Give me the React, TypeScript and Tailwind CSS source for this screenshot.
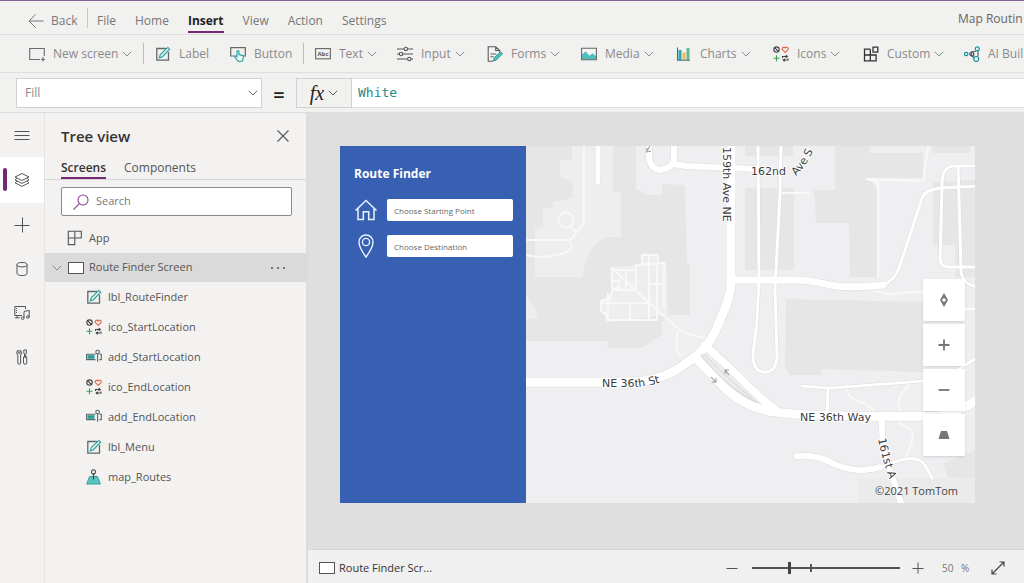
import { useState } from "react";
import type { ReactNode } from "react";

interface IconProps {
  className?: string;
}

interface Tool {
  label: string;
  icon: ReactNode;
  width: string;
  menu?: boolean;
  divider?: boolean;
}

interface Control {
  name: string;
  icon: ReactNode;
}

const Chevron = ({ className = "w-[10px]" }: IconProps) => (
  <svg viewBox="0 0 10 6" className={`shrink-0 ${className}`} fill="none" stroke="currentColor">
    <path d="M0.8 0.8 5 5 9.2 0.8" />
  </svg>
);

const NewScreenIcon = () => (
  <svg viewBox="0 0 16 16" className="w-4 h-4" fill="none" stroke="#6b6b6b" strokeWidth="1.1">
    <path d="M11 13.5H.7v-11h14.6V10" />
    <path d="M14 11v4.500M12 13.500h4" />
  </svg>
);

const LabelIcon = ({ className = "w-4 h-4" }: IconProps) => (
  <svg viewBox="0 0 16 16" className={className} fill="none">
    <path d="M11 2.5H1.8v11.7h11.7V6" stroke="#5f6b6b" strokeWidth="1.3" />
    <path d="m4.3 11.8 1-3.2 7.6-7.2 1.8 1.8-7.3 7.5z" fill="#e4f5f4" stroke="#2a9d9a" strokeWidth="1.1" />
  </svg>
);

const ButtonIcon = () => (
  <svg viewBox="0 0 16 16" className="w-4 h-4" fill="none">
    <path d="M5 10H.7V1.7h14.6V10H13" stroke="#686868" strokeWidth="1.2" />
    <path
      d="M7 10.5V5.6c0-1.4 1.9-1.4 1.9 0v3l3.3.8c1 .3 1.3 1 1.1 2l-.7 3.1c-1.5 1.4-3.9 1.2-5.1 0L4.8 11c0-1.1 1.2-1.4 2.2-.5Z"
      fill="#eefafa"
      stroke="#159b9c"
      strokeWidth="1.1"
    />
  </svg>
);

const TextIcon = () => (
  <svg viewBox="0 0 16 16" className="w-4 h-4" fill="none">
    <rect x=".6" y="2.6" width="14.8" height="10.2" stroke="#666" strokeWidth="1.1" />
    <text x="8" y="10" fontSize="6" fontWeight="700" textAnchor="middle" fill="#555" fontFamily="Open Sans">
      Abc
    </text>
  </svg>
);

const InputIcon = () => (
  <svg viewBox="0 0 16 16" className="w-4 h-4" fill="none" stroke="#555" strokeWidth="1.1">
    <path d="M0 3h7M10.5 3H16M0 8h2.2M5.7 8H16M0 13h10.5M14 13h2" />
    <circle cx="8.8" cy="3" r="1.7" />
    <circle cx="4" cy="8" r="1.7" />
    <circle cx="12.3" cy="13" r="1.7" />
  </svg>
);

const FormsIcon = () => (
  <svg viewBox="0 0 16 16" className="w-4 h-4" fill="none">
    <path d="M6 15.2H1.2V.8h7.5l4 3.7v2M8.7.8v3.7h4M3.5 8h5.8M3.5 10.8h3.2" stroke="#5c5c5c" strokeWidth="1.1" />
    <path d="m6.4 15 1-3.4 6.3-5.8 1.8 1.9-6.1 6.2z" fill="#52c3be" stroke="#249894" />
  </svg>
);

const MediaIcon = () => (
  <svg viewBox="0 0 16 16" className="w-4 h-4">
    <path d="M.6 2.3h14.8v11.4H.6z" fill="#f5f5f5" />
    <path d="M.8 9 4.5 5.3l4 4.5 3-2.5 3.8 3v3.3H.8z" fill="#4fbfbd" />
    <path d="M.6 2.3h14.8v11.4H.6z" fill="none" stroke="#666" strokeWidth="1.1" />
  </svg>
);

const ChartsIcon = () => (
  <svg viewBox="0 0 16 16" className="w-4 h-4">
    <path d="M2.500 4h3v10h-3z" fill="#2ea9ad" />
    <path d="M6.500 6.500h3V14h-3z" fill="#f0b95a" />
    <path d="M10.500 2h3v12h-3z" fill="#65b98c" />
    <path d="M1.5 1.5v12.8h12.500" fill="none" stroke="#34757a" strokeWidth="1.1" />
  </svg>
);

const IconsIcon = () => (
  <svg viewBox="0 0 16 16" className="w-4 h-4" fill="none" strokeWidth="1.1">
    <circle cx="3.5" cy="3.6" r="2.7" stroke="#444" />
    <path d="m1.6 1.7 3.8 3.8" stroke="#444" />
    <path d="M12.2 6.4 9.5 3.7C8.3 1.8 10.8.2 12.2 2c1.4-1.8 3.9-.2 2.7 1.7z" stroke="#df6b4d" />
    <path d="M3.5 9.3v6M.5 12.3h6" stroke="#3e9f56" />
    <path d="M9.500 12v-1.500h4.500M12.700 9.200l1.600 1.300-1.600 1.300M15 12.500V14h-4.500M11.800 12.700 10.200 14l1.600 1.300" stroke="#444" />
  </svg>
);

const CustomIcon = () => (
  <svg viewBox="0 0 16 16" className="w-4 h-4" fill="none" stroke="#333" strokeWidth="1.3">
    <path d="M7.3 3.2H1.5v11.6h11.6V9H1.5M7.3 3.2v11.6M10 1.2h4.8v4.9H10z" />
  </svg>
);

const AiIcon = () => (
  <svg viewBox="0 0 16 16" className="w-4 h-4" fill="none" strokeWidth="1.2">
    <path d="M7.500 10V7.200q0-1.700 1.800-1.700h2.500M14 4.500v5.800M7.500 9.500l2.800 2.500" stroke="#567" />
    <circle cx="2.2" cy="8" r="1.7" stroke="#14999b" />
    <circle cx="7.800" cy="8" r="2" stroke="#456" />
    <circle cx="13.3" cy="2.8" r="2" stroke="#14999b" />
    <circle cx="12.200" cy="13" r="2.500" stroke="#14999b" />
  </svg>
);

const AddressIcon = () => (
  <svg viewBox="0 0 16 16" className="w-4 h-4" fill="none" stroke="#55686a" strokeWidth="1.1">
    <path d="M9.5 5.2H.6v5.4h8.9" />
    <path d="M2 6.7h6v2.5H2z" fill="#2d9d97" stroke="#2d9d97" />
    <circle cx="11.6" cy="3" r="1.8" />
    <path d="M11.6 4.800v8M13.4 5.2h1.9v5.4h-1.9" />
  </svg>
);

const MapIcon = () => (
  <svg viewBox="0 0 16 16" className="w-4 h-4">
    <path d="M3.5 7.500h8l3 7.500H.7z" fill="#59c6bd" stroke="#3b9f98" strokeWidth="1" />
    <circle cx="7.500" cy="2.9" r="2" fill="#f3f2f1" stroke="#555" strokeWidth="1.1" />
    <path d="M7.500 5v5.500" stroke="#444" strokeWidth="1.2" />
  </svg>
);

const AppIcon = () => (
  <svg viewBox="0 0 16 16" className="w-4 h-4" fill="none" stroke="#555" strokeWidth="1.1">
    <path d="M1.3 1.3h6.5v13.3H1.3zM1.3 8h6.5M7.8 1.3h6.5V8H7.8" />
  </svg>
);

const ScreenIcon = () => (
  <span className="block w-4 h-3 shrink-0 border border-[#555] bg-white" />
);

const menus = ["File", "Home", "Insert", "View", "Action", "Settings"];

const tools: Tool[] = [
  { label: "New screen", icon: <NewScreenIcon />, width: "w-[114px]", menu: true },
  { label: "Label", icon: <LabelIcon />, width: "w-[75px]", divider: true },
  { label: "Button", icon: <ButtonIcon />, width: "w-[73px]" },
  { label: "Text", icon: <TextIcon />, width: "w-[82px]", menu: true, divider: true },
  { label: "Input", icon: <InputIcon />, width: "w-[90px]", menu: true },
  { label: "Forms", icon: <FormsIcon />, width: "w-[94px]", menu: true },
  { label: "Media", icon: <MediaIcon />, width: "w-[95px]", menu: true },
  { label: "Charts", icon: <ChartsIcon />, width: "w-[97px]", menu: true },
  { label: "Icons", icon: <IconsIcon />, width: "w-[90px]", menu: true },
  { label: "Custom", icon: <CustomIcon />, width: "w-[101px]", menu: true },
  { label: "AI Buil", icon: <AiIcon />, width: "w-[60px]" },
];

const controls: Control[] = [
  { name: "lbl_RouteFinder", icon: <LabelIcon /> },
  { name: "ico_StartLocation", icon: <IconsIcon /> },
  { name: "add_StartLocation", icon: <AddressIcon /> },
  { name: "ico_EndLocation", icon: <IconsIcon /> },
  { name: "add_EndLocation", icon: <AddressIcon /> },
  { name: "lbl_Menu", icon: <LabelIcon /> },
  { name: "map_Routes", icon: <MapIcon /> },
];

const railItems: Control[] = [
  { name: "Expand menu", icon: <path d="M.5 4.500h15M.5 8.500h15M.5 12.500h15" /> },
  {
    name: "Tree view",
    icon: (
      <path d="M8 1.5 15 5 8 8.5 1 5zM3 6.2 1 7.9l7 3.5 7-3.5-2-1.7M3 9.2l-2 1.6 7 3.6 7-3.6-2-1.6" />
    ),
  },
  { name: "Insert", icon: <path d="M8.500 .5v15M.5 8.500h15" /> },
  {
    name: "Data",
    icon: (
      <>
        <ellipse cx="8" cy="3.7" rx="5" ry="2.2" />
        <path d="M3 3.7v8.6c0 3 10 3 10 0V3.7" />
      </>
    ),
  },
  {
    name: "Media",
    icon: (
      <>
        <path d="M8 10.5H.8V1.500h10.700V4M3 10.5v2.3M.8 12.800h5M10 13V6.500l5.200-1.200v6.500" />
        <path d="M2.500 3v6" strokeDasharray="1 1" />
        <circle cx="8.700" cy="13.2" r="1.3" />
        <circle cx="13.9" cy="12" r="1.3" />
      </>
    ),
  },
  {
    name: "Advanced tools",
    icon: (
      <>
        <path d="M4.2 1v3.2h2V1c1.9 1.5 1.7 4 .4 5v8c0 1.8-2.8 1.8-2.8 0V6c-1.4-1-1.5-3.5.4-5ZM9.8 1h2.6v3l-.7 1v3h-1.2V5l-.7-1z" />
        <path d="M9.5 8h3.2v6c0 1.6-3.2 1.6-3.2 0z" />
      </>
    ),
  },
];

// Roads are drawn twice: a grey casing first, then the white surface.
const roads = [
  { d: "M205 -2V134Q205 150 197 167L190 184Q180 205 160 217Q138 235 104 236H-2", width: 9 },
  { d: "M179 199 210 228Q228 247 250 264", width: 8 },
  { d: "M169 211 200 243Q222 263 250 266Q280 270 347 270H412Q432 266 451 254", width: 9 },
  { d: "M205 134H262Q280 133 300 138T357 139", width: 7 },
  { d: "M123 -2V12Q125 23 134 24Q148 22 148 12V-2", width: 6 },
  { d: "M147 18 160 20 230 23", width: 6 },
  { d: "M357 139Q369 134 373 122L396 52Q399 44 414 42L451 40", width: 3 },
  { d: "M232 -2 233 134 231 174 227 209Q227 226 239 226T251 209L249 144 254 47 255 -2", width: 3 },
  { d: "M451 20H427Q416 22 416 36L414 114Q415 121 422 121H451", width: 3 },
  { d: "M432 21 435 127Q438 139 451 141M451 163H430", width: 3 },
  { d: "M276 240 304 242 396 235Q420 232 434 222L451 212", width: 3 },
  { d: "M302 242 301 266", width: 3 },
  { d: "M356 270Q355 296 360 312L376 360", width: 6 },
  { d: "M271 310Q290 308 304 316 330 329 354 321", width: 6 },
  { d: "M354 321 374 314Q392 309 399 319L406 332", width: 3 },
  { d: "M72 -2V36", width: 5 },
];

const footpaths = [
  "M0 94H44L58 78V0M44 94Q47 102 43 105 20 114 0 109",
  "M44 80 50 86",
  "M86 122 120 154 154 184 166 189 180 192",
  "M151 186V204L155 211",
  "M86 122V142L95 143M86 135H93V143M93 132V142M86 144H110V124H86M100 124V144",
  "M110 124V119H116V109H132V117H138V163M116 118H132M123 109V175M131 117V172M123 138H138",
  "M86 144 84 153 75 155 75 165 81 168V174H131V162M75 157H123M104 157V174M82 147V174",
  "M321 242Q321 252 338 257L348 264",
  "M385 237Q370 250 373 260V277L384 283Q391 290 379 311",
  "M352 132V36L341 33 397 35 402 0M254 47H284",
  "M346 143Q360 150 376 147L397 145",
];

const buildings = [
  "M0 0H110V43L122 49H135L137 38 159 39 161 117 164 119V169H142L135 177 137 188 116 202H82V195H0Z",
  "M219 0H267V10H219Z",
  "M219 42H268V124H219Z",
  "M309 0H344V7H397V32H344L351 45V131H324L323 77H290L288 44H309Z",
  "M407 36 449 34V131H429V99H407Z",
  "M406 0H444V7H406Z",
  "M260 153 397 156V226L296 223V229H264L259 220Z",
  "M417 317 449 304V332L421 331Z",
];

const MapCanvas = () => (
  <svg
    viewBox="0 0 449 357"
    preserveAspectRatio="xMidYMid slice"
    className="block w-full h-full bg-[#efeff1]"
    fill="none"
    strokeLinejoin="round">
    {buildings.map((d) => (
      <path key={d} d={d} fill="#e6e6e6" />
    ))}
    <path
      d="M9 131V82L17 81V62H27V56L39 54 47 51V36L34 31V14H46V0H87V46H95V91H81Q60 98 57 131Z"
      fill="#eeeeef"
    />
    <path d="M82 176 142 169 141 117H132V109H116V119L84 121 86 147 74 154 76 166Z" fill="#eeeeef" />
    <path d="M0 149 9 161 12 172 0 174Z" fill="#eeeeef" />
    <path d="M331 332H449V357H331Z" fill="#ebebec" />
    <g stroke="#f8f8f9" strokeWidth="2">
      {footpaths.map((d) => (
        <path key={d} d={d} />
      ))}
      <circle cx="40" cy="74" r="7.5" />
    </g>
    {roads.map((road) => (
      <path key={road.d} d={road.d} stroke="#dcdcde" strokeWidth={road.width + 1} strokeLinecap="round" />
    ))}
    {roads.map((road) => (
      <path key={road.d} d={road.d} stroke="#fff" strokeWidth={road.width} strokeLinecap="round" />
    ))}
    <path d="M175 209Q202 243 232 257 210 240 178 208Z" fill="#ececee" stroke="#dadadc" strokeWidth="1" />
    <g stroke="#999" strokeWidth="1">
      <path d="M203 229 199 224M199 228V224H203M185 231 190 236M190 232V236H186" />
      <path d="M124 0 121 5M121 2V6L125 5" />
    </g>
    <g
      fill="#3c3c3c"
      stroke="#fff"
      strokeWidth="2"
      paintOrder="stroke"
      fontFamily="'DejaVu Sans', sans-serif"
      fontSize="11">
      <path id="st" d="M76 241H112Q126 239 144 234" fill="none" stroke="none" />
      <path id="ave-s" d="M270 30Q282 18 289 0" fill="none" stroke="none" />
      <path id="ave-161" d="M352 293Q358 322 374 362" fill="none" stroke="none" />
      <text x="274" y="275">NE 36th Way</text>
      <text>
        <textPath href="#st">NE 36th St</textPath>
      </text>
      <text x="225" y="29">162nd</text>
      <text>
        <textPath href="#ave-s">Ave S</textPath>
      </text>
      <text transform="translate(197 1) rotate(90)">159th Ave NE</text>
      <text>
        <textPath href="#ave-161">161st A</textPath>
      </text>
    </g>
  </svg>
);

const mapButtons: Control[] = [
  { name: "Reset rotation", icon: <path d="M8 1 12 8 8 15 4 8ZM8 6.2A1.8 1.8 0 1 0 8 9.8 1.8 1.8 0 1 0 8 6.2Z" fill="#777" fillRule="evenodd" /> },
  { name: "Zoom in", icon: <path d="M8 2.5v11M2.5 8h11" stroke="#777" strokeWidth="1.8" /> },
  { name: "Zoom out", icon: <path d="M2.5 8h11" stroke="#777" strokeWidth="1.8" /> },
  { name: "Pitch", icon: <path d="M5 4h6l2.5 8h-11z" fill="#777" /> },
];

const RoutePreview = () => (
  <div className="flex w-full aspect-video">
    <div className="w-[186px] shrink-0 bg-[#3860b2] pl-[14px] pr-[13px] pt-[18px]">
      <h2 className="text-xs leading-5 font-bold text-white">Route Finder</h2>
      <div className="mt-[14px] flex items-center gap-[9px]">
        <svg viewBox="0 0 24 24" className="w-6 h-6" fill="none" stroke="#e6f2ff" strokeWidth="1.5">
          <path d="M1.5 12.5 12 2.5l10.5 10M4 10.5v11h5.3v-7.8h5.4v7.8H20v-11" />
        </svg>
        <input
          type="text"
          aria-label="Starting point"
          placeholder="Choose Starting Point"
          className="w-0 flex-1 h-[22px] rounded-xs bg-white px-[7px] text-[8px] placeholder:text-[#666]"
        />
      </div>
      <div className="mt-3 flex items-center gap-[9px]">
        <svg viewBox="0 0 24 24" className="w-6 h-6" fill="none" stroke="#e6f2ff" strokeWidth="1.4">
          <path d="M12 23Q5 13.500 5 8a7 7 0 0 1 14 0Q19 13.500 12 23Z" />
          <circle cx="12" cy="8" r="3.600" />
        </svg>
        <input
          type="text"
          aria-label="Destination"
          placeholder="Choose Destination"
          className="w-0 flex-1 h-[22px] rounded-xs bg-white px-[7px] text-[8px] placeholder:text-[#666]"
        />
      </div>
    </div>
    <div className="relative flex-1 min-w-0">
      <MapCanvas />
      <div className="absolute right-[10px] bottom-[47px] flex flex-col gap-[3px]">
        {mapButtons.map((button) => (
          <button
            key={button.name}
            aria-label={button.name}
            className="flex w-[42px] h-[42px] items-center justify-center bg-white shadow-sm">
            <svg viewBox="0 0 16 16" className="w-4 h-4">
              {button.icon}
            </svg>
          </button>
        ))}
      </div>
      <span className="absolute right-[17px] bottom-1 text-[11px] leading-4 text-[#444]">©2021 TomTom</span>
    </div>
  </div>
);

const Header = () => (
  <header className="border-t border-[#8a5f92] bg-[#f1f1f0] text-[#777]">
    <nav className="flex h-[34px] items-start border-b border-[#dedede] text-xs leading-5">
      <a href="#back" className="ml-7 mt-[10px] flex w-[59px] items-center gap-[7px]">
        <svg viewBox="0 0 16 16" className="w-4 h-4" fill="none" stroke="currentColor">
          <path d="M15.500 8H1M7.500 1.500 1 8l6.500 6.500" />
        </svg>
        Back
      </a>
      <span className="mt-[7px] h-5 w-px bg-[#c6c6c6]" />
      <div className="ml-[9px] mt-[10px] flex gap-[19px]">
        {menus.map((menu) => (
          <a
            key={menu}
            href={`#${menu.toLowerCase()}`}
            className={
              menu === "Insert" ? "border-b-2 border-[#742774] font-bold text-[#222]" : ""
            }>
            {menu}
          </a>
        ))}
      </div>
      <span className="ml-auto mt-2 w-[66px] shrink-0 whitespace-nowrap text-[#666]">Map Routin</span>
    </nav>
    <div className="flex h-[38px] items-center border-b border-[#dedede] pl-[29px]">
      {tools.map((tool) => (
        <div key={tool.label} className="flex shrink-0 items-center">
          {tool.divider && <span className="mr-[11px] h-[21px] w-px bg-[#bdbdbd]" />}
          <button className={`flex items-center gap-2 pt-px text-xs text-[#8a8a8a] ${tool.width}`}>
            {tool.icon}
            <span className="flex items-center gap-1 whitespace-nowrap">
              {tool.label}
              {tool.menu && <Chevron />}
            </span>
          </button>
        </div>
      ))}
    </div>
  </header>
);

const FormulaBar = () => (
  <div className="flex h-10 items-center border-b border-[#dcdcdc] bg-[#f1f1f0] pl-4">
    <div className="relative w-[246px]">
      <select
        aria-label="Property"
        className="h-[30px] w-full appearance-none border border-[#d2d2d2] bg-white px-2 text-xs text-[#888]">
        <option>Fill</option>
      </select>
      <Chevron className="pointer-events-none absolute right-1 top-3 w-[10px] text-[#666]" />
    </div>
    <span className="w-[34px] pt-1 text-center text-xl font-semibold text-[#222]">=</span>
    <button className="flex h-[30px] w-[56px] items-center justify-center gap-1 border border-[#d2d2d2] text-[#555]">
      <span className="font-['Liberation_Serif',serif] text-xl leading-5 italic text-[#222]">fx</span>
      <Chevron />
    </button>
    <input
      type="text"
      aria-label="Formula"
      defaultValue="White"
      className="h-[30px] min-w-0 flex-1 border-y border-[#dedede] bg-white px-[6px] font-['DejaVu_Sans_Mono',monospace] text-[13px] text-[#1f8a8a]"
    />
  </div>
);

const Rail = () => (
  <nav className="flex w-[45px] shrink-0 flex-col border-r border-[#e4e3e2]">
    {railItems.map((item) => (
      <button
        key={item.name}
        aria-label={item.name}
        className={`relative flex items-center justify-center text-[#555] ${
          item.name === "Tree view" ? "h-[46px] bg-white" : "h-11"
        }`}>
        {item.name === "Tree view" && (
          <span className="absolute left-[3px] top-[11px] h-[23px] w-1 rounded-xs bg-[#742774]" />
        )}
        <svg viewBox="0 0 16 16" className="w-4 h-4" fill="none" stroke="currentColor">
          {item.icon}
        </svg>
      </button>
    ))}
  </nav>
);

const TreeView = () => (
  <aside className="w-[263px] shrink-0 border-r-2 border-[#dddcdb] text-xs text-[#555]">
    <div className="flex h-[46px] items-center justify-between pl-4 pr-4">
      <h1 className="text-[15px] font-semibold text-[#333]">Tree view</h1>
      <button aria-label="Close">
        <svg viewBox="0 0 14 14" className="w-[14px] h-[14px]" fill="none" stroke="#555" strokeWidth="1.1">
          <path d="m1.500 1.500 11 11M12.500 1.500l-11 11" />
        </svg>
      </button>
    </div>
    <div className="flex gap-[18px] border-b border-[#d8d8d8] pl-4 text-xs leading-[18px]">
      <button className="border-b-2 border-[#742774] font-semibold text-[#333]">Screens</button>
      <button className="border-b-2 border-transparent">Components</button>
    </div>
    <div className="ml-4 mt-[7px] mr-[14px] flex h-[29px] items-center gap-[7px] rounded-xs border border-[#8a8a8a] bg-white pl-[11px]">
      <svg viewBox="0 0 16 16" className="w-4 h-4" fill="none" stroke="#8b4a92" strokeWidth="1.1">
        <circle cx="10" cy="6" r="5" />
        <path d="M6.400 9.600.500 15.500" />
      </svg>
      <input
        type="text"
        aria-label="Search"
        placeholder="Search"
        className="min-w-0 flex-1 text-[11px] outline-none placeholder:text-[#777]"
      />
    </div>
    <div className="mt-[7px] flex h-[30px] items-center gap-[6px] pl-[22px] text-[11px]">
      <AppIcon />
      App
    </div>
    <div className="flex h-[29px] items-center bg-[#dadada] pl-[7px] pr-5 text-[11px]">
      <Chevron className="mr-[6px] w-[10px] text-[#888]" />
      <ScreenIcon />
      <span className="ml-[5px]">Route Finder Screen</span>
      <button aria-label="More options" className="ml-auto">
        <svg viewBox="0 0 16 4" className="w-4 h-1" fill="#555">
          <circle cx="2" cy="2" r="1" />
          <circle cx="8" cy="2" r="1" />
          <circle cx="14" cy="2" r="1" />
        </svg>
      </button>
    </div>
    <ul>
      {controls.map((control) => (
        <li key={control.name} className="flex h-[30px] items-center gap-[6px] pl-[41px] text-[11px]">
          {control.icon}
          {control.name}
        </li>
      ))}
    </ul>
  </aside>
);

const StatusBar = () => {
  const [zoom, setZoom] = useState(50);

  return (
    <footer className="flex h-[34px] items-center border-t border-[#d6d6d6] bg-[#f0f0f0] pl-[11px] pr-[19px] pt-[3px] text-[#555]">
      <ScreenIcon />
      <span className="ml-1 text-[11px] text-[#333]">Route Finder Scr...</span>
      <button aria-label="Zoom out" className="ml-auto">
        <svg viewBox="0 0 12 12" className="w-3 h-3" stroke="currentColor">
          <path d="M.500 6.500h11" />
        </svg>
      </button>
      <div className="relative ml-[14px] mr-3 flex w-[148px] items-center">
        <input
          type="range"
          aria-label="Zoom"
          min="0"
          max="200"
          value={zoom}
          onChange={(e) => setZoom(Number(e.target.value))}
          className="h-[2px] w-full appearance-none bg-[#555] [&::-webkit-slider-thumb]:h-3 [&::-webkit-slider-thumb]:w-[3px] [&::-webkit-slider-thumb]:appearance-none [&::-webkit-slider-thumb]:bg-[#444]"
        />
        <span className="absolute left-[58px] h-2 w-[2px] bg-[#555]" />
      </div>
      <button aria-label="Zoom in">
        <svg viewBox="0 0 12 12" className="w-3 h-3" stroke="currentColor">
          <path d="M.500 6.500h11M6 .500v11" />
        </svg>
      </button>
      <span className="ml-[18px] w-[19px] text-[10px] text-[#777]">{zoom}</span>
      <span className="w-[30px] text-[10px] text-[#777]">%</span>
      <button aria-label="Fit to window">
        <svg viewBox="0 0 14 14" className="w-[14px] h-[14px]" fill="none" stroke="#444" strokeWidth="1.200">
          <path d="m1 13 12-12M8.500 1H13v4.500M1 8.500V13h4.500" />
        </svg>
      </button>
    </footer>
  );
};

const App = () => {
  return (
    <div className="flex min-h-screen flex-col overflow-hidden bg-[#f3f2f1] font-['Open_Sans',sans-serif]">
      <Header />
      <FormulaBar />
      <div className="flex flex-1">
        <Rail />
        <TreeView />
        <main className="flex min-w-0 flex-1 flex-col bg-[#dfdfdf]">
          <div className="flex-1 pl-8 pr-[49px] pt-[33px] pb-8">
            <RoutePreview />
          </div>
          <StatusBar />
        </main>
      </div>
    </div>
  );
};

export default App;
